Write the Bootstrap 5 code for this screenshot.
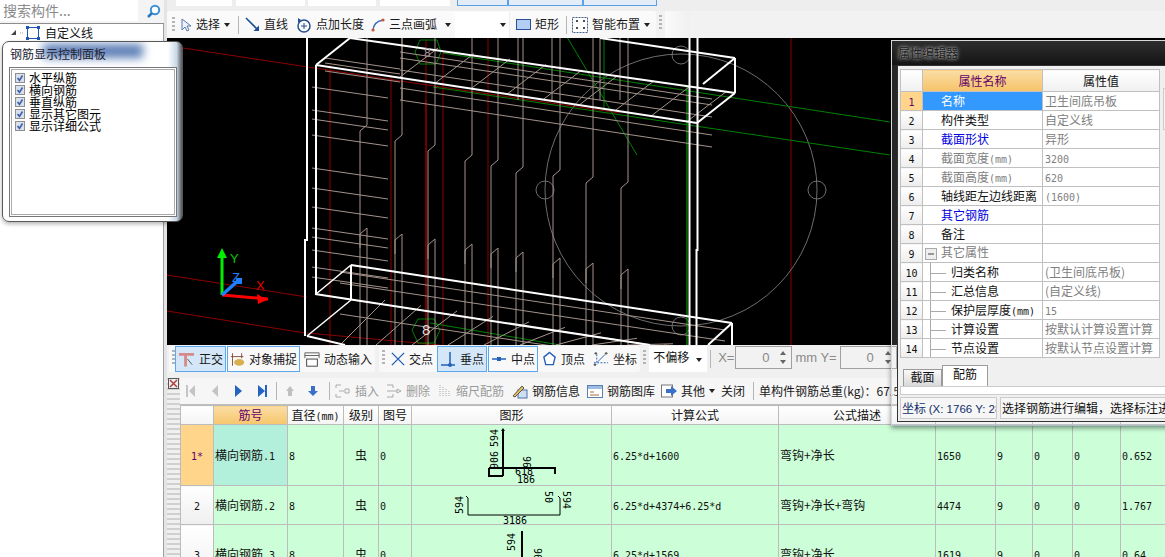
<!doctype html>
<html lang="zh"><head><meta charset="utf-8"><title>钢筋编辑</title>
<link href="https://cdn.jsdelivr.net/npm/bootstrap@5.3.0/dist/css/bootstrap.min.css" rel="stylesheet">
<style>
html,body{width:1165px;height:557px;overflow:hidden;margin:0;background:#f0f0f0}
body{font:12px/1.2 "Noto Sans CJK SC","Liberation Sans",sans-serif;color:#111}
.app{width:1165px;height:557px;position:relative;overflow:hidden}
.sidecol{width:164px;flex:none;background:#f0f0f0}
.searchrow{height:23px;background:#f4f4f4;flex:none}
.searchbox{width:138px;height:21px;background:#fff;border:0;border-radius:0;padding:0 3px;font-size:14px;color:#888;box-shadow:none}
.searchbox::placeholder{color:#8a8a8a}
.treebox{height:534px;background:#fff;border-top:1px solid #8c8c8c;border-right:1px solid #a0a0a0;padding:2px 0 0 11px;font-size:12px;flex:none}
.splitter{width:3px;flex:none;background:#e4e4e4}
.maincol{width:998px;flex:none;height:557px}
.maincol>*{flex:none}
.topfrag{height:11px;background:#eee}
.cellw{height:6px;background:#fff;flex:none}
.cw56{width:56px}.cw69{width:69px}.cw68{width:68px}.cw70{width:70px}
.tabfrag{height:6px;width:200px;background:#e2edf8;border:1px solid #5aa0e8;border-top:0;display:flex;flex:none}
.tabfrag i{display:block;height:5px;border-right:2px solid #5aa0e8}
.tf1{width:51px}.tf2{width:75px}
.gl1{margin-left:1px}.gl2{margin-left:2px}.gl3{margin-left:3px}.gl4{margin-left:4px}.gl5{margin-left:5px}.gl6{margin-left:6px}.gl7{margin-left:7px}.gl8{margin-left:8px}.gl9{margin-left:9px}.gl11{margin-left:11px}
.bar1{height:27px;background:#f2f2f2}
.barinner{width:489px;height:27px;background:linear-gradient(#fbfbfb,#f6f6f6);border-radius:3px;padding-left:2px;flex:none}
.barend{width:25px;height:27px;background:linear-gradient(90deg,#fafafa,#f0f0f0);flex:none}
.grip{width:3px;height:16px;margin:0 3px;background:repeating-linear-gradient(#b4b4b4 0 2px,transparent 2px 4px);flex:none}
.gripl{margin-right:0}
.sep{width:1px;height:18px;background:#b5b5b5;flex:none}
.tool{display:inline-flex;align-items:center;gap:4px;white-space:nowrap;height:26px;padding:0 1px;border:1px solid transparent;border-radius:0;font-size:12px;line-height:1.2;color:#1a1a1a;flex:none;background:transparent}
.tool.btn{padding:0 2px;--bs-btn-font-size:12px}
.tool.btn:hover{border-color:transparent}
.tool svg{flex:none}
.tool.on{background:#d3e7f9;border-color:#5aa8f0}
.tool.ol{border-color:#5aa8f0}
.tool.dim{color:#9b9b9b}
.caret{width:0;height:0;border:3px solid transparent;border-top:4px solid #222;border-bottom:0;flex:none}
.ddwhite{width:55px;height:26px;background:#fff;border-right:1px solid #eee;position:relative;flex:none}
.ddwhite .caret{position:absolute;right:3px;top:11px}
.cad{height:307px;background:#000;position:relative;overflow:hidden}
.cadsvg{position:absolute;left:0;top:0}
.bar2{height:33px;background:#f0f0f0;padding:1px 0 6px 2px}
.seg{background:#f8f8f8;height:26px;border-radius:3px;flex:none}
.offset{width:58px;height:26px;background:#fff;position:relative;padding:4px 4px;font-size:12px;flex:none}
.offset .caret{position:absolute;right:5px;top:12px}
.lab{color:#8a8a8a;font:13px "Liberation Sans",sans-serif;flex:none}
.spin{width:57px;height:23px;border:1px solid #a0a0a0;background:#f2f2f2;color:#888;font:13px "Liberation Sans",sans-serif;text-align:right;padding:3px 22px 0 0;position:relative;flex:none}
.spin::before,.spin::after{content:"";position:absolute;right:5px;border:3px solid transparent}
.spin::before{top:4px;border-bottom:4px solid #666;border-top:0}
.spin::after{bottom:4px;border-top:4px solid #666;border-bottom:0}
.strip{width:13px;flex:none;background:repeating-linear-gradient(#d0d0d0 0 2px,#f0f0f0 2px 5px);position:relative}
.closeicon{position:absolute;left:1px;top:0;background:#f0f0f0}
.barwrap{padding-left:6px;height:27px;background:#f6f6f6;border-bottom:1px solid #bdbdbd;flex:none;overflow:hidden}
.tool.t3{padding:0;border:0;height:24px;font-size:12px}
.grid{width:985px;table-layout:fixed;margin:0;--bs-table-bg:transparent;border-color:#bcbcbc}
.grid>tbody>tr>*,.grid>thead>tr>*{padding:0 1px;border:1px solid #bcbcbc;vertical-align:middle;font-size:12px;font-weight:400;white-space:nowrap;overflow:hidden;line-height:1.1;color:#111;box-shadow:none}
.grid>thead th{height:19px;text-align:center;background:linear-gradient(#fff,#f4f4f4)}
.grid>thead th.act{background:linear-gradient(#fbdda4,#f6c66c);color:#66006a}
.grid>tbody td{background:#ccffd8}
.grid>tbody td.rh{background:linear-gradient(#fff,#efefef);text-align:center}
.grid>tbody td.rhon{background:#ffd58c;color:#66006a;text-align:center}
.grid>tbody td.nm{background:#b3f0dc}
.grid>tbody td.blk{border-left:1px solid #000}
.grid>tbody td.cc{text-align:center}
.r1{height:61px}.r2{height:39px}.r3{height:58px}
.grid>tbody td.shape{padding:0;vertical-align:top}
.shapesvg{display:block}
.num{font:10px "DejaVu Sans Mono",monospace}
.glasspanel{position:absolute;left:2px;top:41px;width:181px;height:181px;border:1px solid #585858;border-radius:7px;background:linear-gradient(90deg,#fff 0,#fff 92%,#c8d8e8 97%,#555 100%);box-shadow:0 2px 4px rgba(0,0,0,.3);overflow:hidden}
.gtitle{height:25px;padding:5px 0 0 7px;font-size:12px;color:#223;position:relative}
.blur{position:absolute;left:40px;top:2px;width:100px;height:14px;background:#3d66a8;filter:blur(5px);opacity:.85}
.gtitle span{position:relative}
.listbox{margin:0 0 0 6px;width:168px;height:150px;border:1px solid #777;outline:1px solid #aaa;outline-offset:-3px;background:#fff;padding:4px 0 0 5px}
.chk{height:12px;line-height:12px;font-size:12px;color:#000;display:flex;align-items:center;gap:4px}
.prop{position:absolute;left:891px;top:40px;width:280px;height:386px;background:rgba(235,240,245,.16);border:1px solid #d8d8d8;border-right:0;border-bottom-color:#aebfcc;box-shadow:0 2px 5px rgba(0,0,0,.45)}
.ptitle{height:24px;padding:5px 0 0 6px;color:#1c1c1c;font-size:12px;text-shadow:0 0 3px #bbb,0 0 5px #999;background:linear-gradient(#2e2e2e,#141414)}
.pbody{position:absolute;left:5px;top:24px;width:274px;height:357px;background:#f0f0f0;border:1px solid #333;border-right:0;padding:3px 0 0 2px}
.ptable{width:259px;table-layout:fixed;margin:0;--bs-table-bg:#fff}
.ptable>tbody>tr>*,.ptable>thead>tr>*{border:1px solid #c0c0c0;padding:0 2px;height:19px;font-size:12px;font-weight:400;white-space:nowrap;overflow:hidden;line-height:1;color:#111;box-shadow:none;vertical-align:middle;background:#fff}
.ptable>thead>tr>th{height:22px;text-align:center;font-size:12px;background:linear-gradient(#fff,#f0f0f0)}
.ptable>thead>tr>th.act{background:linear-gradient(#fbdda4,#f5c369);color:#66006a}
.ptable>tbody>tr>td.rh{text-align:center;background:linear-gradient(#fff,#ededed);padding:0}
.ptable>tbody>tr>td.rhon{text-align:center;background:#ffd58c;color:#66006a;padding:0}
.ptable>tbody>tr>td.sel{background:#3399ff;color:#fff}
.pname{padding-left:18px!important}
.pname2{padding-left:2px!important}
.ptable>tbody>tr>td.blue{color:#0000e0}
.ptable>tbody>tr>td.gr{color:#808080}
.treeln{display:inline-block;width:16px;height:1px;background:#aaa;vertical-align:middle;margin:0 5px 0 5px;position:relative}
.treeln::before{content:"";position:absolute;left:0;top:-10px;width:1px;height:20px;background:#aaa}
.ptabs{height:22px;margin-top:6px;padding-left:3px;align-items:flex-end}
.ptab{height:17px;width:39px;text-align:center;background:linear-gradient(#fafafa,#d8d8d8);border:1px solid #9a9a9a;border-bottom:0;font-size:12px}
.ptab.cur{height:21px;width:46px;background:#fff;padding-top:1px}
.pscroll{height:9px;background:#fff;border:1px solid #ccc}
.pstat{height:22px;margin-top:2px;font-size:12px;gap:3px}
.pstat>div{background:#f6f6f6;border:1px solid #ccc;white-space:nowrap;overflow:hidden;padding:3px 1px 0;height:22px}
.pst1{width:97px;flex:none;color:#12306a}
.pst2{flex:1}
.pst1 i{font:normal 11.5px "Liberation Sans",sans-serif}
.pscrollv{position:absolute;left:265px;top:22px;width:8px;height:42px;background:#f4f4f4;border:1px solid #ccc}
</style></head><body>
<svg width="0" height="0" class="position-absolute">
<symbol id="chk" viewBox="0 0 10 10"><rect x=".5" y=".5" width="9" height="9" fill="#d8e0ec" stroke="#8e8e8e"/><path d="M2.5 5l2 2.3L7.5 2.5" fill="none" stroke="#3a5fa8" stroke-width="1.6"/></symbol>
</svg>
<div class="app d-flex">
 <div class="sidecol d-flex flex-column">
  <div class="searchrow d-flex align-items-start">
   <input class="form-control searchbox" placeholder="搜索构件...">
   <svg class="ms-2 mt-1" width="15" height="15" viewBox="0 0 15 15"><circle cx="9" cy="6" r="4.2" fill="#fff" stroke="#3a90d8" stroke-width="2"/><path d="M6 9L2 13" stroke="#2a78c0" stroke-width="2.5"/></svg>
  </div>
  <div class="treebox d-flex align-items-start">
   <svg width="15" height="16" viewBox="0 0 15 16"><path d="M0 9l5-5v5z" fill="#444"/><path d="M9 7h3" stroke="#999" stroke-dasharray="1 1"/></svg>
   <svg width="14" height="14" viewBox="0 0 14 14"><rect x="1.5" y="1.5" width="11" height="11" fill="none" stroke="#1f55b5"/><g fill="#1f55b5"><rect width="3" height="3"/><rect x="11" width="3" height="3"/><rect y="11" width="3" height="3"/><rect x="11" y="11" width="3" height="3"/></g></svg>
   <span class="gl5">自定义线</span>
  </div>
 </div>
 <div class="splitter"></div>
 <div class="maincol d-flex flex-column">
  <div class="topfrag d-flex">
   <div class="cellw cw56 gl9"></div><div class="cellw cw69 gl4"></div><div class="cellw cw68 gl3"></div><div class="cellw cw70 gl4"></div>
   <div class="tabfrag gl7"><i class="tf1"></i><i class="tf2"></i></div>
  </div>
  <div class="bar1 d-flex">
   <div class="barinner d-flex align-items-center">
    <span class="grip"></span>
    <span class="tool"><svg width="12" height="14" viewBox="0 0 12 14"><path d="M2 1v11l3-3 2 4 2-1-2-4h4z" fill="#eef3fb" stroke="#5a7ab0"/></svg>选择<span class="caret"></span></span>
    <span class="sep gl6"></span>
    <span class="tool gl4"><svg width="15" height="15" viewBox="0 0 15 15"><path d="M1 1l11 11" stroke="#1c4f96" stroke-width="1.6"/><path d="M14 14H8.5L14 8.5z" fill="#1c4f96"/></svg>直线</span>
    <span class="tool gl4"><svg width="16" height="16" viewBox="0 0 16 16"><circle cx="8" cy="9" r="6" fill="#fff" stroke="#234f8e" stroke-width="1.5"/><path d="M8 6v6M5 9h6" stroke="#234f8e"/><path d="M2 1l3 2-3 3z" fill="#234f8e"/></svg>点加长度</span>
    <span class="tool gl3"><svg width="14" height="14" viewBox="0 0 14 14"><path d="M2 13C2 7 6 3 12 2" fill="none" stroke="#3a6ab8" stroke-width="1.4"/><circle cx="2" cy="12" r="1.6" fill="#c8573a"/><circle cx="12" cy="2" r="1.6" fill="#c8573a"/></svg>三点画弧<span class="caret gl4"></span></span>
    <span class="ddwhite gl2"><span class="caret"></span></span>
    <span class="tool gl4"><svg width="15" height="11" viewBox="0 0 15 11"><rect x=".5" y=".5" width="14" height="10" fill="#b4cdf2" stroke="#2a4f95"/></svg>矩形</span>
    <span class="sep gl5"></span>
    <span class="tool gl3"><svg width="16" height="16" viewBox="0 0 16 16"><rect x=".5" y=".5" width="15" height="15" fill="#fff" stroke="#3e5c85" stroke-dasharray="2 1"/><path d="M4 4h2M5 3v2M11 4h2M12 3v2M4 11h2M5 10v2M11 11h2M12 10v2" stroke="#111"/></svg>智能布置<span class="caret"></span></span>
   </div>
   <span class="grip mt-1 gl4"></span>
   <div class="barend"></div>
  </div>
  <div class="cad">
   <svg class="cadsvg" id="cad" width="998" height="307" viewBox="167 38 998 307"></svg>
  </div>
  <div class="bar2 d-flex">
   <div class="seg d-flex">
    <span class="grip gripl mt-1"></span>
    <button class="tool on btn"><svg width="17" height="17" viewBox="0 0 18 17"><path d="M1 3h16M8 3v13" stroke="#d88a88" stroke-width="3"/><path d="M10 8l5 6" stroke="#555"/></svg>正交</button>
    <button class="tool ol btn gl1"><svg width="15" height="17" viewBox="0 0 18 17"><path d="M3 1v15M14 1v6M1 5h15" stroke="#7a3a2a"/><ellipse cx="11" cy="12" rx="6" ry="4" fill="#d8b050"/></svg>对象捕捉</button>
    <button class="tool btn gl1"><svg width="16" height="17" viewBox="0 0 18 17"><path d="M1 1h16M1 4h16M1 1v6M17 1v6" stroke="#555"/><rect x="3" y="8" width="12" height="8" fill="#fff" stroke="#333"/></svg>动态输入</button>
   </div>
   <div class="seg d-flex gl4">
    <span class="grip mt-1"></span>
    <button class="tool btn"><svg width="14" height="16" viewBox="0 0 16 16"><path d="M1 1l14 14M15 1L1 15" stroke="#2460b8" stroke-width="1.6"/></svg>交点</button>
    <button class="tool on btn gl1"><svg width="16" height="16" viewBox="0 0 16 16"><path d="M10 1v13M1 14h14" stroke="#2460b8" stroke-width="1.5"/><circle cx="10" cy="14" r="2" fill="#2460b8"/></svg>垂点</button>
    <button class="tool ol btn gl1"><svg width="16" height="16" viewBox="0 0 16 16"><path d="M1 8h14" stroke="#2460b8" stroke-width="1.5"/><rect x="6" y="6" width="4" height="4" fill="#2460b8"/></svg>中点</button>
    <button class="tool btn gl1"><svg width="15" height="16" viewBox="0 0 16 16"><path d="M8 1l6 5-2 8H4L2 6z" fill="#fff" stroke="#2460b8" stroke-width="1.5"/></svg>顶点</button>
    <button class="tool btn gl2"><svg width="16" height="16" viewBox="0 0 17 16"><path d="M4 3v11M1 12h15" stroke="#2460b8" stroke-dasharray="2 1.5"/><path d="M5 11l8-8" stroke="#2460b8"/><circle cx="3" cy="2" r="1.3" fill="#555"/><circle cx="14" cy="2" r="1.3" fill="#555"/><circle cx="2" cy="14" r="1.3" fill="#555"/></svg>坐标</button>
   </div>
   <span class="grip mt-1 gl4"></span>
   <div class="offset">不偏移<span class="caret"></span></div>
   <span class="sep gl3 mt-1"></span>
   <span class="lab gl7 mt-1">X=</span>
   <div class="spin gl1">0</div>
   <span class="lab gl3 mt-1">mm Y=</span>
   <div class="spin gl3">0</div>
  </div>
  <div class="d-flex flex-grow-1">
   <div class="strip">
    <svg class="closeicon" width="11" height="11" viewBox="0 0 11 11"><rect x=".5" y=".5" width="10" height="10" fill="#eee" stroke="#555"/><path d="M2 2l7 7M9 2L2 9" stroke="#b04040" stroke-width="1.5"/></svg>
   </div>
   <div class="flex-grow-1 d-flex flex-column">
    <div class="barwrap d-flex align-items-center">
     <svg class="flex-shrink-0" width="82" height="14" viewBox="0 0 82 14"><g fill="#c4c4c4"><rect x="0" y="1" width="2" height="12"/><path d="M9 1v12L3 7z"/><path d="M32 1v12l-6-6z"/></g><g fill="#2563c0"><path d="M49 1v12l7-6z"/><path d="M72 1v12l7-6z"/><rect x="79" y="1" width="2" height="12"/></g></svg>
     <span class="sep gl8"></span>
     <svg class="gl9 flex-shrink-0" width="32" height="14" viewBox="0 0 32 14"><path d="M4 2l4 5H6v5H2V7H0z" fill="#c0c0c0"/><path d="M27 12l5-5h-3V2h-4v5h-3z" fill="#3a70c8"/></svg>
     <span class="sep gl11"></span>
     <span class="tool t3 dim gl5"><svg width="16" height="14" viewBox="0 0 16 14"><path d="M6 1H1v3M1 10v3h5M4 7h5M10 5h4v4h-4z" fill="none" stroke="#aaa"/></svg>插入</span>
     <span class="tool t3 dim gl7"><svg width="16" height="14" viewBox="0 0 16 14"><path d="M1 1h6v3M1 13h6v-3M1 7h10M11 5l4 2-4 2z" fill="none" stroke="#aaa"/></svg>删除</span>
     <span class="tool t3 dim gl9"><svg width="13" height="14" viewBox="0 0 13 14"><path d="M1 1v12M4 3v10M7 5v8M10 7v6" stroke="#aaa" stroke-dasharray="1 1"/></svg>缩尺配筋</span>
     <span class="tool t3 gl8"><svg width="16" height="15" viewBox="0 0 16 15"><rect x="6" y="6" width="9" height="8" fill="#cfe0f5" stroke="#4a70a8"/><path d="M1 12L10 2l2 2-9 9z" fill="#e8c050" stroke="#555"/></svg>钢筋信息</span>
     <span class="tool t3 gl7"><svg width="16" height="13" viewBox="0 0 16 13"><rect x=".5" y=".5" width="15" height="12" fill="#fff" stroke="#5a80b0"/><rect x="1" y="1" width="14" height="3" fill="#9cbce4"/><path d="M3 7h4M3 10h9" stroke="#b06a3a"/></svg>钢筋图库</span>
     <span class="tool t3 gl6"><svg width="16" height="14" viewBox="0 0 16 14"><rect x=".5" y="1" width="11" height="12" fill="#fff" stroke="#777"/><path d="M5 5h5V2l6 5-6 5V9H5z" fill="#3a70c8"/></svg>其他<span class="caret"></span></span>
     <span class="tool t3 gl6">关闭</span>
     <span class="sep gl8"></span>
     <span class="tool t3 gl5">单构件钢筋总重(kg)：67.5</span>
    </div>
    <table class="table grid">
     <colgroup><col style="width:33px"><col style="width:74px"><col style="width:56px"><col style="width:35px"><col style="width:33px"><col style="width:200px"><col style="width:167px"><col style="width:157px"><col style="width:60px"><col style="width:37px"><col style="width:40px"><col style="width:48px"><col style="width:45px"></colgroup>
     <thead><tr><th></th><th class="act">筋号</th><th>直径<span class="num">(mm)</span></th><th>级别</th><th>图号</th><th>图形</th><th>计算公式</th><th>公式描述</th><th></th><th></th><th></th><th></th><th></th></tr></thead>
     <tbody>
      <tr class="r1"><td class="rhon"><span class="num">1*</span></td><td class="nm">横向钢筋<span class="num">.1</span></td><td class="blk"><span class="num">8</span></td><td class="cc">虫</td><td><span class="num">0</span></td>
       <td class="shape"><svg class="shapesvg" width="200" height="60" viewBox="0 0 200 60"><path d="M91 5v46M77 43h66v6M77 43v8h14" fill="none" stroke="#000" stroke-width="2"/><path d="M91 3l-2 3h4z"/><g font-family="DejaVu Sans Mono" font-size="10" fill="#000"><text transform="translate(86 22)rotate(-90)">594</text><text transform="translate(86 44)rotate(-90)">906</text><text transform="translate(111 31)rotate(90)">96</text><text x="103" y="50">618</text><text x="105" y="58">186</text></g></svg></td>
       <td><span class="num">6.25*d+1600</span></td><td>弯钩+净长</td><td><span class="num">1650</span></td><td><span class="num">9</span></td><td><span class="num">0</span></td><td><span class="num">0</span></td><td><span class="num">0.652</span></td></tr>
      <tr class="r2"><td class="rh"><span class="num">2</span></td><td class="nn">横向钢筋<span class="num">.2</span></td><td class="blk"><span class="num">8</span></td><td class="cc">虫</td><td><span class="num">0</span></td>
       <td class="shape"><svg class="shapesvg" width="200" height="38" viewBox="0 0 200 38"><path d="M56 12v17h92V12M56 12l-2-2M148 12l-2-2" fill="none" stroke="#000"/><g font-family="DejaVu Sans Mono" font-size="10" fill="#000"><text transform="translate(51 28)rotate(-90)">594</text><text transform="translate(133 5)rotate(90)">50</text><text transform="translate(151 5)rotate(90)">594</text><text x="91" y="38">3186</text></g></svg></td>
       <td><span class="num">6.25*d+4374+6.25*d</span></td><td>弯钩+净长+弯钩</td><td><span class="num">4474</span></td><td><span class="num">9</span></td><td><span class="num">0</span></td><td><span class="num">0</span></td><td><span class="num">1.767</span></td></tr>
      <tr class="r3"><td class="rh"><span class="num">3</span></td><td class="nn">横向钢筋<span class="num">.3</span></td><td class="blk"><span class="num">8</span></td><td class="cc">虫</td><td><span class="num">0</span></td>
       <td class="shape"><svg class="shapesvg" width="200" height="33" viewBox="0 0 200 33"><path d="M110 6v27M73 33h3" fill="none" stroke="#000" stroke-width="2"/><g font-family="DejaVu Sans Mono" font-size="10" fill="#000"><text transform="translate(103 26)rotate(-90)">594</text><text transform="translate(122 23)rotate(90)">96</text></g></svg></td>
       <td><span class="num">6.25*d+1569</span></td><td>弯钩+净长</td><td><span class="num">1619</span></td><td><span class="num">9</span></td><td><span class="num">0</span></td><td><span class="num">0</span></td><td><span class="num">0.64</span></td></tr>
     </tbody>
    </table>
   </div>
  </div>
 </div>

 <div class="glasspanel">
  <div class="gtitle"><div class="blur"></div><span>钢筋显示控制面板</span></div>
  <div class="listbox">
   <label class="chk"><svg width="10" height="10"><use href="#chk"/></svg>水平纵筋</label>
   <label class="chk"><svg width="10" height="10"><use href="#chk"/></svg>横向钢筋</label>
   <label class="chk"><svg width="10" height="10"><use href="#chk"/></svg>垂直纵筋</label>
   <label class="chk"><svg width="10" height="10"><use href="#chk"/></svg>显示其它图元</label>
   <label class="chk"><svg width="10" height="10"><use href="#chk"/></svg>显示详细公式</label>
  </div>
 </div>

 <div class="prop">
  <div class="ptitle">属性编辑器</div>
  <div class="pbody">
   <table class="table ptable">
    <colgroup><col style="width:22px"><col style="width:120px"><col style="width:117px"></colgroup>
    <thead><tr><th></th><th class="act">属性名称</th><th>属性值</th></tr></thead>
    <tbody>
     <tr><td class="rhon"><span class="num">1</span></td><td class="pname sel">名称</td><td class="gr">卫生间底吊板</td></tr>
     <tr><td class="rh"><span class="num">2</span></td><td class="pname">构件类型</td><td class="gr">自定义线</td></tr>
     <tr><td class="rh"><span class="num">3</span></td><td class="pname blue">截面形状</td><td class="gr">异形</td></tr>
     <tr><td class="rh"><span class="num">4</span></td><td class="pname gr">截面宽度<span class="num">(mm)</span></td><td class="gr"><span class="num">3200</span></td></tr>
     <tr><td class="rh"><span class="num">5</span></td><td class="pname gr">截面高度<span class="num">(mm)</span></td><td class="gr"><span class="num">620</span></td></tr>
     <tr><td class="rh"><span class="num">6</span></td><td class="pname">轴线距左边线距离</td><td class="gr"><span class="num">(1600)</span></td></tr>
     <tr><td class="rh"><span class="num">7</span></td><td class="pname blue">其它钢筋</td><td></td></tr>
     <tr><td class="rh"><span class="num">8</span></td><td class="pname">备注</td><td></td></tr>
     <tr><td class="rh"><span class="num">9</span></td><td class="pname2 gr"><svg class="me-1" width="12" height="12" viewBox="0 0 12 12"><rect x=".5" y=".5" width="11" height="11" fill="#eee" stroke="#aaa"/><path d="M3 6h6" stroke="#444"/></svg>其它属性</td><td></td></tr>
     <tr><td class="rh"><span class="num">10</span></td><td class="pname2"><span class="treeln"></span>归类名称</td><td class="gr">(卫生间底吊板)</td></tr>
     <tr><td class="rh"><span class="num">11</span></td><td class="pname2"><span class="treeln"></span>汇总信息</td><td class="gr">(自定义线)</td></tr>
     <tr><td class="rh"><span class="num">12</span></td><td class="pname2"><span class="treeln"></span>保护层厚度<span class="num">(mm)</span></td><td class="gr"><span class="num">15</span></td></tr>
     <tr><td class="rh"><span class="num">13</span></td><td class="pname2"><span class="treeln"></span>计算设置</td><td class="gr">按默认计算设置计算</td></tr>
     <tr><td class="rh"><span class="num">14</span></td><td class="pname2"><span class="treeln"></span>节点设置</td><td class="gr">按默认节点设置计算</td></tr>
    </tbody>
   </table>
   <div class="pscrollv"></div>
   <div class="ptabs d-flex"><div class="ptab">截面</div><div class="ptab cur">配筋</div></div>
   <div class="pscroll"></div>
   <div class="pstat d-flex"><div class="pst1">坐标 <i>(X: 1766 Y: 28</i></div><div class="pst2">选择钢筋进行编辑，选择标注进行修改</div></div>
  </div>
 </div>
</div>
<script>
var s='',R='#a3938b',DR='#8b0000',G='#008000',W='#fff';
function p(d,c,w){s+='<path d="'+d+'" fill="none" stroke="'+c+'" stroke-width="'+(w||1)+'"/>';}
function ln(a,b,c,d,col,w){p('M'+a+' '+b+'L'+c+' '+d,col,w);}
function circ(x,y,r,c){s+='<circle cx="'+x+'" cy="'+y+'" r="'+r+'" fill="none" stroke="'+c+'"/>';}
ln(183,48,400,81,DR);ln(400,81,620,113,DR);
ln(167,275,307,297,DR);ln(167,311,305,333,DR);
ln(307,333,440,345,DR);
[[330,65],[391,75],[443,50],[488,38],[791,38]].forEach(function(a){ln(a[0],a[1],a[0],345,DR);});
ln(426,40,426,100,DR);ln(426,100,426,345,'#e00000');
circ(681,190,136,'#6e6e6e');circ(545,190,9,'#6e6e6e');circ(817,190,9,'#6e6e6e');circ(681,55,9,'#6e6e6e');circ(681,326,9,'#6e6e6e');
ln(433,87,890,155,G);ln(443,53,890,122,G);ln(567,37,637,155,G);ln(604,38,604,108,G);ln(687,85,687,345,G,1.4);
ln(430,323,560,345,G);
s+='<polygon points="420,40 437,40 441,52 436,64 420,64 415,52" fill="none" stroke="#008000"/>';
s+='<polygon points="418,319 434,319 440,330 434,343 418,343 412,330" fill="none" stroke="#008000"/>';
[52,58,70,88,100].forEach(function(y){ln(400,y,712,y+47,R);});
[45,50,58].forEach(function(y){ln(325,y+13,400,y+24,R);});
for(var x=400;x<690;x+=36){ln(x,77+.152*(x-400),x+38,48+.152*(x-400),R);}
[87,110,119,135,168,188,207,228,237,250,267,277].forEach(function(y){ln(312,y,388,y+11,R);});
[[367,125,228],[402,135,234],[435,145,239],[472,155,244],[498,160,248],[523,167,252],[560,170,258],[593,177,263],[628,182,269]].forEach(function(a){
 var x=a[0],j=a[1],h=a[2];
 p('M'+x+' 38V'+j+'L'+(x-7)+' '+(j+6)+'V'+(h+20),R);
 p('M'+(x-7)+' '+(h+6)+'L'+x+' '+h+'V345M'+(x-7)+' '+(h+6)+'V345',R);
});
[402,518,552,600,620].forEach(function(x){ln(x,38,x,100,R);});
[270,281,296,312].forEach(function(y){ln(340,y+2,725,y+60,R);});
for(x=340;x<700;x+=36){ln(x,345,x+45,300+.152*(x-340),R);}
ln(316,65,697,123,W,2);ln(350,38,735,93,W,2);ln(600,38,735,58,W,2);
ln(316,65,350,38,W,2);ln(697,123,735,93,W,2);ln(735,58,735,93,W,2);ln(735,58,703,84,W,2);
p('M307 38V240L305 240V336',W,2);ln(316,65,316,294,W,2);
p('M689.5 38V150M689.5 150V345',W,2);p('M697.5 38V250L696.5 250V345',W,2);
ln(351,265,732,323,W,2);ln(351,265,316,294,W,1.5);ln(351,265,351,300,W,2);
ln(315,294,650,345,W,2);ln(351,300,307,336,W,1.5);ln(307,336,345,345,W,2);
ln(732,323,732,345,W,2);ln(732,323,708,345,W,2);
s+='<text x="422" y="335" font-family="Liberation Sans" font-size="15" fill="#ddd">8</text>';
s+='<text x="424" y="57" font-family="Liberation Sans" font-size="12" fill="#999">8</text>';
p('M222 295V254','#00ee00',3);s+='<polygon points="222,248 217,258 227,258" fill="#00ee00"/>';
p('M222 295L268 299','#ff0000',3);s+='<polygon points="267,300 257,294 258,304" fill="#ff0000"/>';
p('M222 295L240 279','#1e80ff',3.5);s+='<rect x="236" y="278" width="6" height="6" fill="#1e80ff"/>';
s+='<g font-family="Liberation Sans" font-size="13"><text x="230" y="263" fill="#00c800">Y</text><text x="232" y="282" fill="#2080ff">Z</text><text x="256" y="290" fill="#e00000">X</text></g>';
document.getElementById('cad').innerHTML=s;
</script>
</body></html>
